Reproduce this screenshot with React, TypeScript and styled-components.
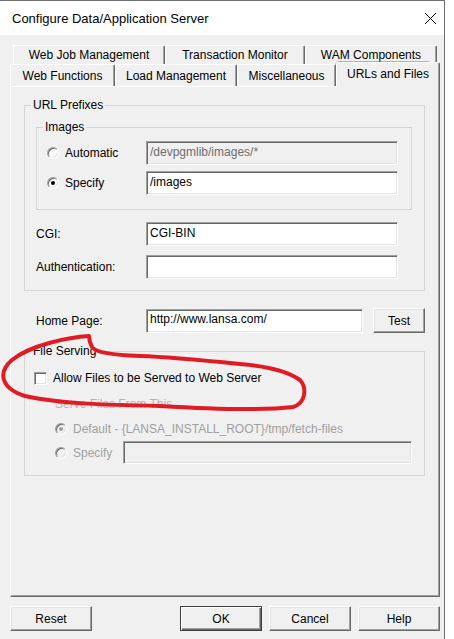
import React from 'react';
import styled, { createGlobalStyle, css } from 'styled-components';

const GlobalStyle = createGlobalStyle`
  html, body {
    margin: 0;
    padding: 0;
    background: #ffffff;
  }
  body {
    font-family: 'Liberation Sans', Arial, sans-serif;
    font-size: 12px;
    color: #000000;
  }
  * {
    box-sizing: border-box;
  }
`;

const Window = styled.div`
  position: relative;
  width: 445px;
  height: 639px;
  border-top: 1px solid #707070;
  border-right: 1px solid #707070;
  display: flex;
  flex-direction: column;
`;

const TitleBar = styled.div`
  height: 34px;
  flex: none;
  background: #ffffff;
  display: flex;
  align-items: center;
  justify-content: space-between;
  padding: 0 7px 0 12px;
`;

const Title = styled.span`
  font-size: 13px;
  white-space: nowrap;
`;

const CloseIcon = styled.svg`
  width: 13px;
  height: 13px;
  display: block;
`;

const Body = styled.div`
  flex: 1;
  background: #f0f0f0;
  padding: 10px 4px 0 10px;
  display: flex;
  flex-direction: column;
`;

const TabStrip = styled.div`
  display: flex;
  flex-direction: column;
  height: 41px;
  flex: none;
`;

const TabRow = styled.div<{ $h: number; $indent: number }>`
  display: flex;
  height: ${p => p.$h}px;
  padding-left: ${p => p.$indent}px;
`;

const Tab = styled.div<{ $w: number; $selected?: boolean }>`
  width: ${p => p.$w}px;
  flex: none;
  display: flex;
  align-items: center;
  justify-content: center;
  white-space: nowrap;
  background: #f0f0f0;
  border-top: 1px solid #ffffff;
  border-left: 1px solid #ffffff;
  border-right: 1px solid #696969;
  box-shadow: inset -1px 0 0 #a0a0a0;
  border-radius: 2px 2px 0 0;
  ${p =>
    p.$selected &&
    css`
      position: relative;
      z-index: 1;
      margin-top: -2px;
      margin-bottom: -1px;
      padding-bottom: 2px;
    `}
`;

const Panel = styled.div`
  height: 511px;
  flex: none;
  border: 1px solid;
  border-color: #ffffff #696969 #696969 #ffffff;
  box-shadow: inset -1px -1px 0 #a0a0a0;
  padding: 11px 14px 0 13px;
  display: flex;
  flex-direction: column;
`;

const GroupBox = styled.fieldset<{ $mt?: number }>`
  margin: ${p => p.$mt ?? 0}px 0 0 0;
  padding: 0;
  border: 1px solid #d5d5d5;
  min-width: 0;
`;

const GroupLegend = styled.legend`
  margin-left: 6px;
  padding: 0 2px;
  font-size: 12px;
  line-height: 14px;
`;

const GroupBody = styled.div<{ $pad: string }>`
  padding: ${p => p.$pad};
  display: flex;
  flex-direction: column;
`;

const OptionRow = styled.div<{ $mt?: number; $cols: string; $h?: number }>`
  display: grid;
  grid-template-columns: ${p => p.$cols};
  align-items: center;
  height: ${p => p.$h ?? 24}px;
  margin-top: ${p => p.$mt ?? 0}px;
`;

const Option = styled.label<{ $disabled?: boolean }>`
  display: flex;
  align-items: center;
  gap: 6px;
  color: ${p => (p.$disabled ? '#a0a0a0' : '#000000')};
  white-space: nowrap;
`;

const Radio = styled.span<{ $checked?: boolean; $disabled?: boolean }>`
  position: relative;
  width: 12px;
  height: 12px;
  flex: none;
  border-radius: 50%;
  background: ${p => (p.$disabled ? '#f0f0f0' : '#ffffff')};
  border: 1px solid;
  border-color: #a0a0a0 #ffffff #ffffff #a0a0a0;
  box-shadow: inset 1px 1px 0 #696969, inset -1px -1px 0 #e3e3e3;
  &::after {
    content: '';
    display: ${p => (p.$checked ? 'block' : 'none')};
    position: absolute;
    left: 3px;
    top: 3px;
    width: 4px;
    height: 4px;
    border-radius: 50%;
    background: ${p => (p.$disabled ? '#a0a0a0' : '#000000')};
  }
`;

const CheckBox = styled.span`
  width: 13px;
  height: 13px;
  flex: none;
  background: #ffffff;
  border: 1px solid;
  border-color: #a0a0a0 #ffffff #ffffff #a0a0a0;
  box-shadow: inset 1px 1px 0 #696969, inset -1px -1px 0 #e3e3e3;
`;

const TextField = styled.input<{ $w: number; $h?: number; $disabled?: boolean }>`
  width: ${p => p.$w}px;
  height: ${p => p.$h ?? 24}px;
  border: 1px solid;
  border-color: #a0a0a0 #ffffff #ffffff #a0a0a0;
  box-shadow: inset 1px 1px 0 #696969, inset -1px -1px 0 #e3e3e3;
  background: ${p => (p.$disabled ? '#f0f0f0' : '#ffffff')};
  color: ${p => (p.$disabled ? '#6d6d6d' : '#000000')};
  font-family: 'Liberation Sans', Arial, sans-serif;
  font-size: 12px;
  padding: 0 0 3px 3px;
  outline: none;
  margin: 0;
`;

const FieldRow = styled.div<{ $mt?: number; $ml?: number; $h?: number }>`
  display: flex;
  align-items: center;
  gap: 10px;
  height: ${p => p.$h ?? 24}px;
  margin-top: ${p => p.$mt ?? 0}px;
  margin-left: ${p => p.$ml ?? 0}px;
`;

const FieldLabel = styled.span`
  width: 100px;
  flex: none;
  white-space: nowrap;
`;

const Button = styled.button<{ $w: number; $default?: boolean }>`
  width: ${p => p.$w}px;
  height: 25px;
  flex: none;
  margin: 0;
  padding: 0;
  font-family: 'Liberation Sans', Arial, sans-serif;
  font-size: 12px;
  color: #000000;
  background: #f0f0f0;
  border: 1px solid;
  border-color: #ffffff #696969 #696969 #ffffff;
  box-shadow: inset -1px -1px 0 #a0a0a0, inset 1px 1px 0 #e3e3e3;
  ${p =>
    p.$default &&
    css`
      border-color: #3c3c3c;
      box-shadow: inset 1px 1px 0 #ffffff, inset -1px -1px 0 #696969,
        inset -2px -2px 0 #a0a0a0;
    `}
`;

const CheckRow = styled.label`
  display: flex;
  align-items: center;
  gap: 6px;
  height: 16px;
  white-space: nowrap;
`;

const SubGroup = styled.div`
  display: flex;
  flex-direction: column;
  margin-top: 11px;
  padding-left: 21px;
`;

const DisabledCaption = styled.span`
  color: #b4b4b4;
  line-height: 14px;
`;

const Footer = styled.div`
  display: flex;
  gap: 7px;
  margin-top: 9px;
  & > :first-child {
    margin-right: auto;
  }
`;

const Annotations = styled.svg`
  position: absolute;
  top: -1px;
  left: 0;
  pointer-events: none;
  overflow: visible;
`;

const topTabs = [
  { label: 'Web Job Management', w: 152 },
  { label: 'Transaction Monitor', w: 140 },
  { label: 'WAM Components', w: 132 },
];

const bottomTabs = [
  { label: 'Web Functions', w: 105 },
  { label: 'Load Management', w: 122 },
  { label: 'Miscellaneous', w: 99 },
  { label: 'URLs and Files', w: 104, selected: true },
];

const App = () => {
  return (
    <>
      <GlobalStyle />
      <Window>
        <TitleBar>
          <Title>Configure Data/Application Server</Title>
          <CloseIcon viewBox="0 0 13 13">
            <path d="M1 1 L12 12 M12 1 L1 12" stroke="#000" strokeWidth="1" fill="none" />
          </CloseIcon>
        </TitleBar>
        <Body>
          <TabStrip>
            <TabRow $h={19} $indent={3}>
              {topTabs.map(t => (
                <Tab key={t.label} $w={t.w}>
                  {t.label}
                </Tab>
              ))}
            </TabRow>
            <TabRow $h={22} $indent={0}>
              {bottomTabs.map(t => (
                <Tab key={t.label} $w={t.w} $selected={t.selected}>
                  {t.label}
                </Tab>
              ))}
            </TabRow>
          </TabStrip>
          <Panel>
            <GroupBox>
              <GroupLegend>URL Prefixes</GroupLegend>
              <GroupBody $pad="8px 12px 11px 11px">
                <GroupBox>
                  <GroupLegend>Images</GroupLegend>
                  <GroupBody $pad="7px 12px 14px 10px">
                    <OptionRow $cols="99px 252px">
                      <Option>
                        <Radio />
                        Automatic
                      </Option>
                      <TextField $w={252} $disabled readOnly value="/devpgmlib/images/*" />
                    </OptionRow>
                    <OptionRow $cols="99px 252px" $mt={6}>
                      <Option>
                        <Radio $checked />
                        Specify
                      </Option>
                      <TextField $w={252} readOnly value="/images" />
                    </OptionRow>
                  </GroupBody>
                </GroupBox>
                <FieldRow $mt={12}>
                  <FieldLabel>CGI:</FieldLabel>
                  <TextField $w={252} readOnly value="CGI-BIN" />
                </FieldRow>
                <FieldRow $mt={9}>
                  <FieldLabel>Authentication:</FieldLabel>
                  <TextField $w={252} readOnly value="" />
                </FieldRow>
              </GroupBody>
            </GroupBox>

            <FieldRow $mt={17} $ml={12} $h={25}>
              <FieldLabel>Home Page:</FieldLabel>
              <TextField $w={218} readOnly value="http://www.lansa.com/" />
              <Button $w={52}>Test</Button>
            </FieldRow>

            <GroupBox $mt={11}>
              <GroupLegend>File Serving</GroupLegend>
              <GroupBody $pad="12px 12px 11px 9px">
                <CheckRow>
                  <CheckBox />
                  Allow Files to be Served to Web Server
                </CheckRow>
                <SubGroup>
                  <DisabledCaption>Serve Files From This</DisabledCaption>
                  <OptionRow $cols="auto" $mt={11} $h={14}>
                    <Option $disabled>
                      <Radio $checked $disabled />
                      Default - {'{LANSA_INSTALL_ROOT}'}/tmp/fetch-files
                    </Option>
                  </OptionRow>
                  <OptionRow $cols="68px 289px" $mt={5} $h={23}>
                    <Option $disabled>
                      <Radio $disabled />
                      Specify
                    </Option>
                    <TextField $w={289} $h={23} $disabled readOnly value="" />
                  </OptionRow>
                </SubGroup>
              </GroupBody>
            </GroupBox>
          </Panel>
          <Footer>
            <Button $w={82}>Reset</Button>
            <Button $w={82} $default>
              OK
            </Button>
            <Button $w={82}>Cancel</Button>
            <Button $w={82}>Help</Button>
          </Footer>
        </Body>
        <Annotations width="445" height="639" viewBox="0 0 445 639">
          <rect
            x="336.5"
            y="62.5"
            width="94"
            height="22"
            rx="3"
            fill="none"
            stroke="#e8414a"
            strokeWidth="2.2"
          />
          <path
            d="M89 336 C70 337 30 345 12 360 C-2 372 0 388 25 396 C60 404 110 405 160 406 C210 409 260 411 293 407 C306 403 307 388 300 380 C286 370 265 366 240 364 C200 360 170 357 140 356 C110 355 95 352 92 347 C90 343 89 340 89 336"
            fill="none"
            stroke="#e01b24"
            strokeWidth="4"
            strokeLinecap="round"
            strokeLinejoin="round"
          />
        </Annotations>
      </Window>
    </>
  );
};

export default App;
